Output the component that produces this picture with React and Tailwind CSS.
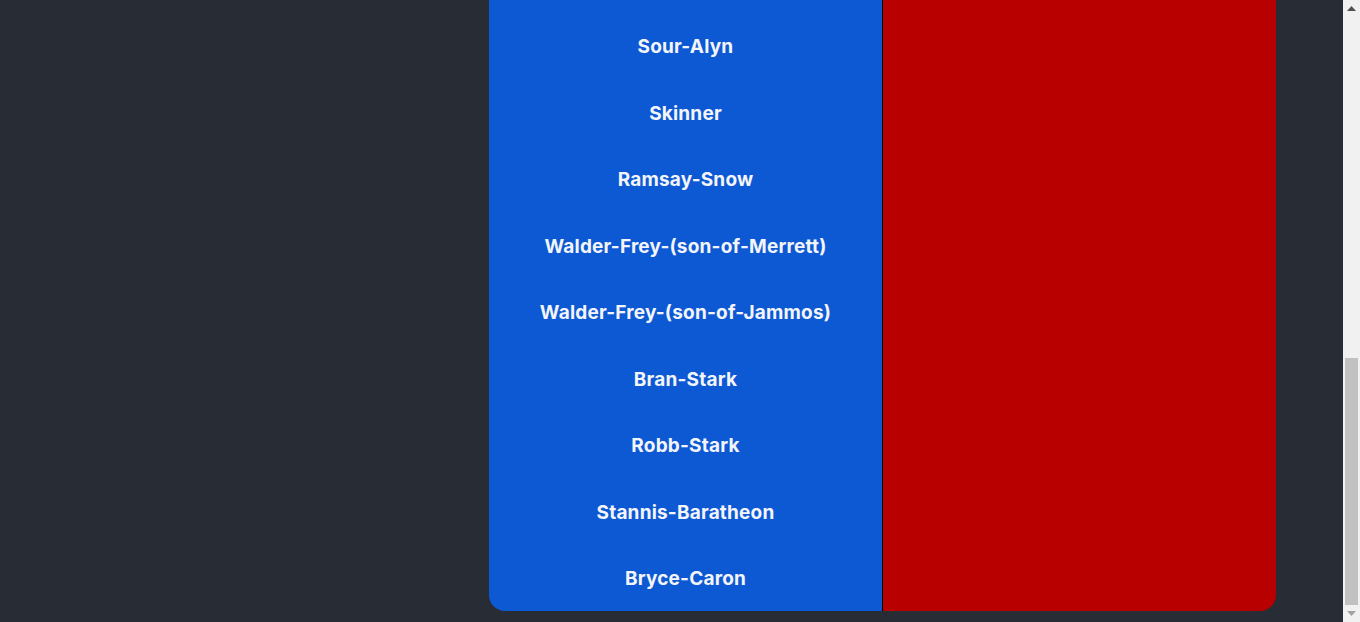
const names = [
  "Sour-Alyn",
  "Skinner",
  "Ramsay-Snow",
  "Walder-Frey-(son-of-Merrett)",
  "Walder-Frey-(son-of-Jammos)",
  "Bran-Stark",
  "Robb-Stark",
  "Stannis-Baratheon",
  "Bryce-Caron",
];

export default function App() {
  return (
    <div className="flex h-[622px] w-full overflow-hidden bg-[#282c34]">
      {/* page body, scrolled to the bottom */}
      <main className="flex-1 flex justify-start pl-[489px] pb-[11px]">
        <div className="flex w-[787px] h-full">
          {/* names column */}
          <div
            className="w-[393px] bg-[#0d59d3] rounded-bl-2xl pt-[14px] flex flex-col overflow-hidden"
            style={{ fontFamily: "Inter, 'Open Sans', sans-serif" }}
          >
            {names.map((n) => (
              <div
                key={n}
                className="h-[66.5px] shrink-0 flex items-center justify-center text-[19px] font-bold text-[#f3f5fb] tracking-[0.2px]"
              >
                {n}
              </div>
            ))}
          </div>
          <div className="w-px bg-black" />
          <div className="w-[393px] bg-[#b80000] rounded-br-2xl" />
        </div>
      </main>

      {/* scrollbar */}
      <div className="w-[17px] bg-[#f1f1f1] flex flex-col items-center">
        <div className="h-[17px] flex items-center justify-center">
          <svg width="9" height="5" viewBox="0 0 9 5">
            <path d="M4.5 0 L9 5 L0 5 Z" fill="#505050" />
          </svg>
        </div>
        <div className="flex-1 w-full flex flex-col justify-end px-[2px]">
          <div className="h-[247px] bg-[#c1c1c1]" />
        </div>
        <div className="h-[17px] flex items-center justify-center">
          <svg width="9" height="5" viewBox="0 0 9 5">
            <path d="M0 0 L9 0 L4.5 5 Z" fill="#a3a3a3" />
          </svg>
        </div>
      </div>
    </div>
  );
}
